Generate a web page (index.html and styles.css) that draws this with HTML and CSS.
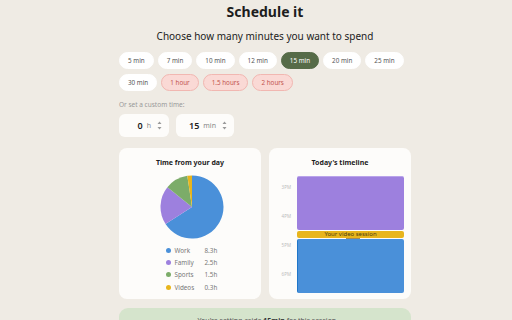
FILE: index.html
```html
<!DOCTYPE html>
<html lang="en">
<head>
    <meta charset="UTF-8">
    <title>Schedule it</title>
    <link rel="stylesheet" href="styles.css">
</head>
<body>
    <main class="page">
        <h1 class="title">Schedule it</h1>
        <p class="subtitle">Choose how many minutes you want to spend</p>

        <div class="chips">
            <button class="chip">5 min</button>
            <button class="chip">7 min</button>
            <button class="chip">10 min</button>
            <button class="chip">12 min</button>
            <button class="chip selected">15 min</button>
            <button class="chip">20 min</button>
            <button class="chip">25 min</button>
            <button class="chip">30 min</button>
            <button class="chip long">1 hour</button>
            <button class="chip long">1.5 hours</button>
            <button class="chip long">2 hours</button>
        </div>

        <p class="custom-label">Or set a custom time:</p>
        <div class="custom-inputs">
            <div class="time-box hours">
                <span class="num">0</span>
                <span class="unit">h</span>
                <svg class="spin" width="5" height="9" viewBox="0 0 5 9"><path d="M2.5 0.5 L4.5 3 L0.5 3 Z M2.5 8.5 L4.5 6 L0.5 6 Z" fill="#9a9a9a"/></svg>
            </div>
            <div class="time-box minutes">
                <span class="num">15</span>
                <span class="unit">min</span>
                <svg class="spin" width="5" height="9" viewBox="0 0 5 9"><path d="M2.5 0.5 L4.5 3 L0.5 3 Z M2.5 8.5 L4.5 6 L0.5 6 Z" fill="#9a9a9a"/></svg>
            </div>
        </div>

        <div class="cards">
            <section class="card">
                <h3 class="card-title">Time from your day</h3>
                <svg class="pie" width="64" height="64" viewBox="0 0 64 64">
                    <path d="M32 32 L32 0.5 A31.5 31.5 0 1 1 5.53 49.08 Z" fill="#4a90d9"/>
                    <path d="M32 32 L5.53 49.08 A31.5 31.5 0 0 1 7.37 12.36 Z" fill="#9d80de"/>
                    <path d="M32 32 L7.37 12.36 A31.5 31.5 0 0 1 27.31 0.85 Z" fill="#7cac69"/>
                    <path d="M32 32 L27.31 0.85 A31.5 31.5 0 0 1 32 0.5 Z" fill="#e8b51c"/>
                </svg>
                <div class="legend">
                    <span class="dot work"></span><span>Work</span><span>8.3h</span>
                    <span class="dot family"></span><span>Family</span><span>2.5h</span>
                    <span class="dot sports"></span><span>Sports</span><span>1.5h</span>
                    <span class="dot videos"></span><span>Videos</span><span>0.3h</span>
                </div>
            </section>

            <section class="card">
                <h3 class="card-title">Today's timeline</h3>
                <div class="timeline">
                    <div class="hours-col">
                        <span>3PM</span>
                        <span>4PM</span>
                        <span>5PM</span>
                        <span>6PM</span>
                    </div>
                    <div class="blocks">
                        <div class="block family"></div>
                        <div class="block session">Your video session<span class="handle"></span></div>
                        <div class="block work"></div>
                    </div>
                </div>
            </section>
        </div>

        <div class="banner">
            <span class="bullet">&middot;</span> You're setting aside <strong>15min</strong> for this session
        </div>
    </main>
</body>
</html>
```

FILE: styles.css
```css
html, body {
    margin: 0;
    padding: 0;
    background: #efebe4;
    font-family: 'Noto Sans', 'Open Sans', sans-serif;
    color: #222;
}

.page {
    width: 292px;
    margin-left: 119px;
}

.title {
    margin: 0;
    padding-top: 2px;
    font-size: 14px;
    line-height: 19px;
    font-weight: 700;
    text-align: center;
    color: #1d1d1d;
}

.subtitle {
    margin: 8px 0 0 0;
    font-size: 10px;
    line-height: 15px;
    text-align: center;
    color: #222;
}

.chips {
    display: flex;
    flex-wrap: wrap;
    gap: 5px 4px;
    margin-top: 8px;
}

.chip {
    height: 17px;
    padding: 0 8px;
    border: 1px solid #fff;
    border-radius: 9px;
    background: #fff;
    font-family: inherit;
    font-size: 6.3px;
    color: #555;
}

.chip.selected {
    background: #566b48;
    border-color: #566b48;
    color: #fff;
}

.chip.long {
    background: #fad9d5;
    border-color: #f1b7b1;
    color: #c2544f;
}

.custom-label {
    margin: 9px 0 0 0;
    font-size: 6.5px;
    line-height: 10px;
    color: #999;
}

.custom-inputs {
    display: flex;
    gap: 7px;
    margin-top: 4px;
}

.time-box {
    display: flex;
    align-items: center;
    justify-content: flex-end;
    height: 23px;
    padding-right: 7px;
    border-radius: 6px;
    background: #fdfcfa;
    box-sizing: border-box;
}

.time-box.hours {
    width: 50px;
}

.time-box.minutes {
    width: 58px;
}

.time-box .num {
    font-size: 9px;
    font-weight: 600;
    color: #222;
}

.time-box .unit {
    margin-left: 4px;
    font-size: 7px;
    color: #888;
}

.time-box .spin {
    margin-left: 6px;
}

.cards {
    display: grid;
    grid-template-columns: 1fr 1fr;
    gap: 8px;
    margin-top: 11px;
}

.card {
    height: 151px;
    border-radius: 8px;
    background: #fdfcfa;
    box-sizing: border-box;
    padding-top: 9px;
    display: flex;
    flex-direction: column;
    align-items: center;
}

.card-title {
    margin: 0;
    font-size: 7px;
    line-height: 11px;
    font-weight: 700;
    color: #1d1d1d;
}

.pie {
    margin-top: 7px;
    margin-left: 3px;
}

.legend {
    display: grid;
    grid-template-columns: 9px 30px 14px;
    grid-auto-rows: 12.3px;
    align-items: center;
    margin-top: 5px;
    margin-left: 4px;
    font-size: 6.3px;
    color: #777;
}

.dot {
    width: 5px;
    height: 5px;
    border-radius: 50%;
}

.dot.work { background: #4a90d9; }
.dot.family { background: #9d80de; }
.dot.sports { background: #7cac69; }
.dot.videos { background: #e8b51c; }

.timeline {
    display: flex;
    align-self: stretch;
    margin-top: 8px;
    padding-right: 7px;
}

.hours-col {
    display: flex;
    flex-direction: column;
    gap: 21px;
    width: 22px;
    padding-top: 7px;
    padding-right: 6px;
    align-items: flex-end;
    font-size: 4.5px;
    line-height: 8px;
    color: #bbb;
}

.blocks {
    flex: 1;
    display: flex;
    flex-direction: column;
    gap: 1px;
}

.block {
    border-radius: 2px;
}

.block.family {
    height: 54px;
    background: #9d80de;
    border-top: 1px solid #b9a3ea;
    box-sizing: border-box;
}

.block.session {
    position: relative;
    height: 7px;
    background: #e8b51c;
    font-size: 6px;
    line-height: 7px;
    text-align: center;
    color: #4d3d0c;
}

.handle {
    position: absolute;
    left: 46%;
    bottom: -1px;
    width: 14px;
    height: 1px;
    background: #a08a5a;
}

.block.work {
    height: 54px;
    background: #4a90d9;
    border-left: 1px solid #1f76c9;
    box-sizing: border-box;
}

.banner {
    margin-top: 9px;
    padding: 8px 0;
    border-radius: 9px;
    background: #d5e4cc;
    font-size: 7px;
    line-height: 10px;
    text-align: center;
    color: #555;
}

.banner strong {
    color: #333;
}
```
